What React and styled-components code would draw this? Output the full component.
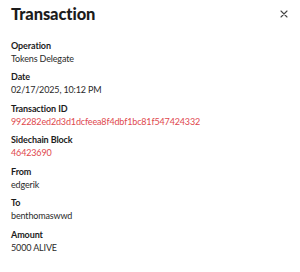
import React from "react";
import styled, { createGlobalStyle } from "styled-components";

const Global = createGlobalStyle`
  html, body { margin: 0; padding: 0; background: #fff; }
  body { font-family: Lato, "Noto Sans", sans-serif; color: #222; }
`;

const Panel = styled.div`
  width: 300px;
  height: 272px;
  box-sizing: border-box;
  padding: 0 11px;
  background: #fff;
`;

const Header = styled.div`
  display: flex;
  align-items: center;
  justify-content: space-between;
  height: 27px;
`;

const Title = styled.h1`
  margin: 0;
  font-size: 16.5px;
  line-height: 24px;
  font-weight: 900;
  letter-spacing: -0.1px;
  color: #1c1c1c;
`;

const Close = styled.button`
  border: 0;
  background: none;
  padding: 0;
  width: 10px;
  height: 10px;
  display: flex;
  align-items: center;
  justify-content: center;
  cursor: pointer;
`;

const List = styled.div`
  display: flex;
  flex-direction: column;
  gap: 5.5px;
  padding-top: 11.5px;
`;

const Field = styled.div`
  display: flex;
  flex-direction: column;
`;

const Label = styled.div`
  font-size: 9px;
  line-height: 13px;
  font-weight: 700;
  letter-spacing: -0.1px;
  color: #1c1c1c;
`;

const Value = styled.div`
  font-size: 9px;
  line-height: 13px;
  letter-spacing: -0.15px;
  color: ${(p) => (p.$link ? "#e0484e" : "#2a2a2a")};
`;

const fields = [
  ["Operation", "Tokens Delegate"],
  ["Date", "02/17/2025, 10:12 PM"],
  ["Transaction ID", "992282ed2d3d1dcfeea8f4dbf1bc81f547424332", true],
  ["Sidechain Block", "46423690", true],
  ["From", "edgerik"],
  ["To", "benthomaswwd"],
  ["Amount", "5000 ALIVE"],
];

export default function App() {
  return (
    <>
      <Global />
      <Panel>
        <Header>
          <Title>Transaction</Title>
          <Close aria-label="Close">
            <svg width="8" height="8" viewBox="0 0 8 8">
              <path d="M1 1L7 7M7 1L1 7" stroke="#444" strokeWidth="1.1" strokeLinecap="round" />
            </svg>
          </Close>
        </Header>
        <List>
          {fields.map(([l, v, link]) => (
            <Field key={l}>
              <Label>{l}</Label>
              <Value $link={link}>{v}</Value>
            </Field>
          ))}
        </List>
      </Panel>
    </>
  );
}
